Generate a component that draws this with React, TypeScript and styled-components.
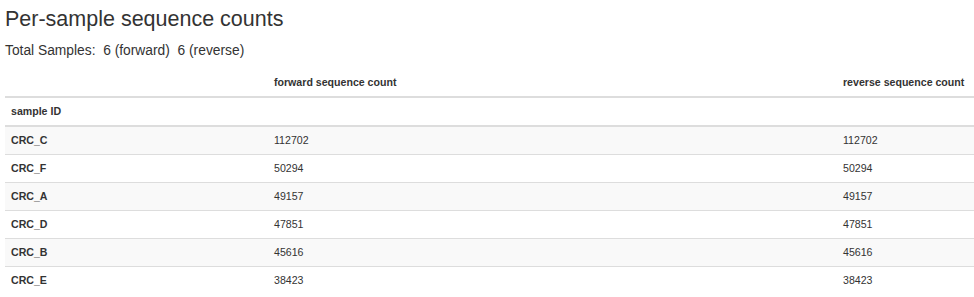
import styled, { createGlobalStyle } from 'styled-components';

const GlobalStyle = createGlobalStyle`
  body {
    margin: 0;
    background: #fff;
    font-family: 'Liberation Sans', Arial, Helvetica, sans-serif;
    color: #333;
  }
`;

const Page = styled.div`
  padding: 0 0 0 5px;
`;

const Title = styled.h1`
  font-size: 21.5px;
  font-weight: 400;
  line-height: 25px;
  margin: 7px 0 10px;
  color: #333;
`;

const Summary = styled.p`
  font-size: 13.8px;
  line-height: 18px;
  margin: 0 0 9px;
  white-space: pre;
`;

const Table = styled.table`
  width: 100%;
  border-collapse: collapse;
  border-spacing: 0;
  font-size: 10.6px;
  line-height: 15px;
  table-layout: fixed;
`;

const Head = styled.th<{ $width?: number }>`
  box-sizing: border-box;
  text-align: left;
  font-weight: 700;
  padding: 6px;
  border-bottom: 2px solid #ddd;
  white-space: nowrap;
  width: ${({ $width }) => ($width ? `${$width}px` : 'auto')};
`;

const Row = styled.tr<{ $striped: boolean }>`
  background: ${({ $striped }) => ($striped ? '#f9f9f9' : '#fff')};
`;

const Cell = styled.td<{ $bold?: boolean }>`
  padding: 6px;
  height: 15px;
  border-top: 1px solid #ddd;
  font-weight: ${({ $bold }) => ($bold ? 700 : 400)};
`;

const rows = [
  { id: 'CRC_C', forward: 112702, reverse: 112702 },
  { id: 'CRC_F', forward: 50294, reverse: 50294 },
  { id: 'CRC_A', forward: 49157, reverse: 49157 },
  { id: 'CRC_D', forward: 47851, reverse: 47851 },
  { id: 'CRC_B', forward: 45616, reverse: 45616 },
  { id: 'CRC_E', forward: 38423, reverse: 38423 },
];

const App = () => (
  <Page>
    <GlobalStyle />
    <Title>Per-sample sequence counts</Title>
    <Summary>Total Samples:  6 (forward)  6 (reverse)</Summary>
    <Table>
      <thead>
        <tr>
          <Head $width={263}></Head>
          <Head $width={569}>forward sequence count</Head>
          <Head>reverse sequence count</Head>
        </tr>
        <tr>
          <Head>sample ID</Head>
          <Head></Head>
          <Head></Head>
        </tr>
      </thead>
      <tbody>
        {rows.map((row, i) => (
          <Row key={row.id} $striped={i % 2 === 0}>
            <Cell $bold>{row.id}</Cell>
            <Cell>{row.forward}</Cell>
            <Cell>{row.reverse}</Cell>
          </Row>
        ))}
      </tbody>
    </Table>
  </Page>
);

export default App;
